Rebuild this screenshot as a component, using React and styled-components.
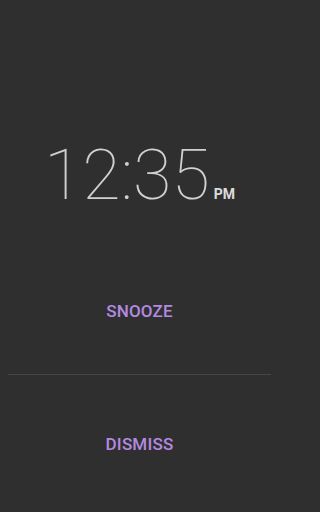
import React from "react";
import styled, { createGlobalStyle } from "styled-components";

const Global = createGlobalStyle`
  html, body {
    margin: 0;
    padding: 0;
    background: #2f2f2f;
  }
  * {
    box-sizing: border-box;
  }
`;

const Screen = styled.main`
  width: 279px;
  height: 512px;
  background: #2f2f2f;
  display: flex;
  flex-direction: column;
  font-family: Roboto, "Noto Sans", sans-serif;
`;

const ClockArea = styled.section`
  height: 248px;
  display: flex;
  justify-content: center;
  padding-top: 140px;
`;

const Clock = styled.div`
  display: flex;
  align-items: baseline;
  height: 80px;
`;

const Time = styled.span`
  font-size: 70px;
  font-weight: 100;
  color: #d0d0d0;
  line-height: 1;
  letter-spacing: 0;
`;

const Meridiem = styled.span`
  font-size: 14px;
  font-weight: 700;
  color: #dcdcdc;
  margin-left: 4px;
`;

const Actions = styled.section`
  flex: 1;
  display: flex;
  flex-direction: column;
`;

const Action = styled.button`
  border: none;
  background: transparent;
  color: #b48ae0;
  font-family: Roboto, "Noto Sans", sans-serif;
  font-size: 17px;
  font-weight: 500;
  letter-spacing: 0.2px;
  cursor: pointer;
  height: ${(p) => (p.$grow ? "auto" : "126px")};
  flex: ${(p) => (p.$grow ? 1 : "none")};
  display: flex;
  align-items: center;
  justify-content: center;
  padding: 0;
`;

const Divider = styled.hr`
  border: none;
  height: 1px;
  background: #464646;
  margin: 0 8px;
`;

export default function App() {
  return (
    <>
      <Global />
      <Screen>
        <ClockArea>
          <Clock>
            <Time>12:35</Time>
            <Meridiem>PM</Meridiem>
          </Clock>
        </ClockArea>
        <Actions>
          <Action>SNOOZE</Action>
          <Divider />
          <Action $grow>DISMISS</Action>
        </Actions>
      </Screen>
    </>
  );
}
